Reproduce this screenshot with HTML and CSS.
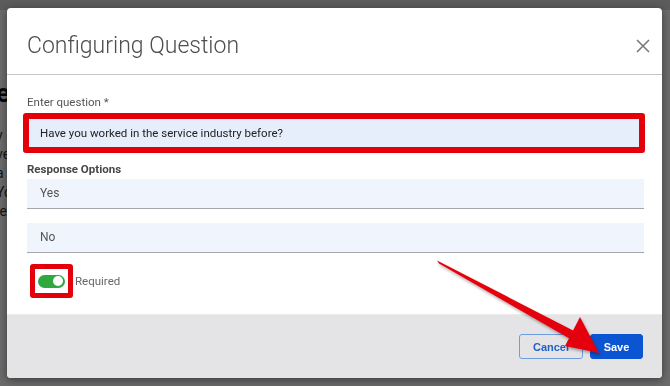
FILE: index.html
```html
<!DOCTYPE html>
<html lang="en">
<head>
<meta charset="utf-8">
<title>Configuring Question</title>
<link rel="stylesheet" href="styles.css">
</head>
<body>
<div class="page">
  <div class="page-topbar"></div>
  <div class="page-content">
    <h1 class="page-title">e</h1>
    <p class="page-text">y<br>ve<br>a<br>Yo<br>le</p>
  </div>
</div>
<div class="backdrop"></div>
<div class="modal">
  <div class="modal-header">
    <h2 class="modal-title">Configuring Question</h2>
    <svg class="close-icon" width="14" height="14" viewBox="0 0 14 14"><path d="M1 1L13 13M13 1L1 13" stroke="#7a7a7a" stroke-width="1.6" fill="none"/></svg>
  </div>
  <div class="modal-body">
    <div class="field-label">Enter question *</div>
    <div class="mark-box">
      <div class="question-input">Have you worked in the service industry before?</div>
    </div>
    <div class="section-label">Response Options</div>
    <div class="option-row">Yes</div>
    <div class="option-row option-gap">No</div>
    <div class="toggle-row">
      <div class="mark-toggle">
        <span class="toggle"><span class="knob"></span></span>
      </div>
      <span class="toggle-label">Required</span>
    </div>
  </div>
  <div class="modal-footer">
    <button class="btn btn-outline">Cancel</button>
    <button class="btn btn-primary">Save</button>
  </div>
</div>
<svg class="arrow" width="670" height="386" viewBox="0 0 670 386">
  <defs>
    <filter id="sh" x="-10%" y="-10%" width="130%" height="130%">
      <feDropShadow dx="1" dy="2" stdDeviation="1.5" flood-color="#000" flood-opacity="0.35"/>
    </filter>
  </defs>
  <g filter="url(#sh)" fill="#e4000b">
    <polygon points="437,260.5 439,263.5 572,340 576,332"/>
    <polygon points="599,353 580,317 565,346"/>
  </g>
</svg>
</body>
</html>
```
FILE: styles.css
```css
* { box-sizing: border-box; }
html, body { margin: 0; padding: 0; }
body {
  width: 670px;
  height: 386px;
  overflow: hidden;
  font-family: Roboto, "Liberation Sans", sans-serif;
  background: #fff;
}
.page { width: 670px; height: 386px; background: #fff; overflow: hidden; }
.page-topbar { height: 10px; background: #dcdcdc; }
.page-content { padding: 68px 0 0 0; margin-left: -4px; color: #111; }
.page-title { margin: 0; font-size: 26px; font-weight: 700; line-height: 30px; }
.page-text { margin: 18px 0 0; font-size: 14px; line-height: 19px; color: #333; }
.backdrop { position: fixed; inset: 0; background: rgba(0,0,0,0.58); }
.modal {
  position: absolute;
  left: 7px;
  top: 8px;
  width: 655px;
  height: 370px;
  background: #fff;
  border-radius: 4px;
  overflow: hidden;
  display: flex;
  flex-direction: column;
  box-shadow: 0 2px 8px rgba(0,0,0,0.45);
}
.modal-header {
  height: 67px;
  padding: 10px 12px 0 20px;
  border-bottom: 1px solid #c6c6c6;
  display: flex;
  align-items: center;
  justify-content: space-between;
}
.modal-title {
  margin: 0;
  font-size: 23px;
  font-weight: 300;
  line-height: 28px;
  color: #4e4e4e;
}
.close-icon { display: block; }
.modal-body {
  flex: 1;
  padding: 19px 18px 0 20px;
}
.field-label {
  font-size: 11.5px;
  line-height: 16px;
  color: #555;
}
.mark-box {
  margin: 3px 0 0 -4px;
  width: 622px;
  height: 40px;
  border: 6px solid #e3000b;
  border-radius: 3px;
}
.question-input {
  height: 100%;
  background: #e6eefb;
  padding-left: 11px;
  font-size: 11.5px;
  line-height: 28px;
  color: #222;
}
.section-label {
  margin-top: 8px;
  font-size: 11.5px;
  font-weight: 700;
  line-height: 16px;
  color: #474747;
}
.option-row {
  margin-top: 2px;
  height: 30px;
  background: #f0f5fd;
  border-bottom: 1px solid #a3a6ab;
  padding-left: 13px;
  font-size: 12px;
  line-height: 29px;
  color: #555;
}
.option-gap { margin-top: 14px; }
.toggle-row {
  margin-top: 11px;
  display: flex;
  align-items: center;
  gap: 2px;
}
.mark-toggle {
  margin-left: 3px;
  width: 43px;
  height: 34px;
  border: 5px solid #e3000b;
  border-radius: 3px;
  background: #fff;
  display: flex;
  align-items: center;
  justify-content: center;
}
.toggle {
  width: 27px;
  height: 13px;
  border-radius: 7px;
  background: #2ea83f;
  display: flex;
  align-items: center;
  justify-content: flex-end;
  padding-right: 2px;
}
.knob {
  width: 10px;
  height: 10px;
  border-radius: 50%;
  background: #fff;
}
.toggle-label {
  font-size: 11.5px;
  color: #666;
}
.modal-footer {
  height: 64px;
  background: #e4e4e7;
  border-top: 1px solid #ececec;
  display: flex;
  justify-content: flex-end;
  align-items: flex-start;
  gap: 7px;
  padding: 19px 19px 0 0;
}
.btn {
  height: 25px;
  border-radius: 3px;
  font-family: "Liberation Sans", Arial, sans-serif;
  font-size: 11px;
  font-weight: 700;
  padding: 0;
  cursor: pointer;
}
.btn-outline {
  width: 64px;
  background: transparent;
  border: 1px solid #6e9ee0;
  color: #2461c6;
}
.btn-primary {
  width: 53px;
  background: #0b54d2;
  border: 1px solid #0b54d2;
  color: #fff;
}
.arrow {
  position: absolute;
  left: 0;
  top: 0;
  pointer-events: none;
}
```
